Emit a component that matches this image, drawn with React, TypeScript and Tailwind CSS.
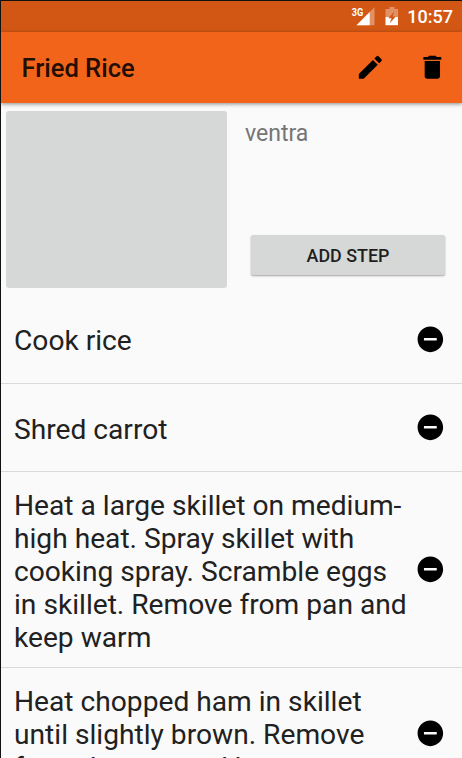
import React from "react";

const steps: { lines: string[]; height: string; shift: string }[] = [
  { lines: ["Cook rice"], height: "h-[89px]", shift: "pt-[2px]" },
  { lines: ["Shred carrot"], height: "h-[88px]", shift: "pt-[4px]" },
  {
    lines: [
      "Heat a large skillet on medium-",
      "high heat. Spray skillet with",
      "cooking spray. Scramble eggs",
      "in skillet. Remove from pan and",
      "keep warm",
    ],
    height: "h-[196px]",
    shift: "pt-[4px]",
  },
  {
    lines: ["Heat chopped ham in skillet", "until slightly brown. Remove", "from the pan and keep warm"],
    height: "h-[131px]",
    shift: "pt-[2px]",
  },
];

function StatusBar() {
  return (
    <div className="flex h-[31px] shrink-0 items-center justify-end bg-[#d35714] pr-[9px] text-white">
      <svg className="mr-[10px] h-[21px] w-[24px]" viewBox="0 0 24 21">
        <path d="M23.5 1.3v17.9H5.5z" fill="#fff" fillOpacity=".35" />
        <path d="M18.7 6.1v13.1H5.5z" fill="#fff" />
        <text x="0.8" y="9.6" fill="#fff" fontFamily="Roboto" fontWeight="700" fontSize="11" textLength="11.5" lengthAdjust="spacingAndGlyphs">3G</text>
      </svg>
      <svg className="mr-[8px] h-[21px] w-[14px]" viewBox="0 0 14 21">
        <path d="M4.5 1h5v2h3.5v8H.5V3h4z" fill="#fff" fillOpacity=".35" />
        <path d="M.5 11H13v8.2H.5z" fill="#fff" />
        <path d="M9.6 5.3 3.2 12.2h3.4l-2 5.2 6.2-6.9H7.6z" fill="#d35714" />
      </svg>
      <span className="text-[18px] leading-[20px] font-medium">10:57</span>
    </div>
  );
}

function AppBar() {
  return (
    <div className="z-10 flex h-[71px] shrink-0 items-center bg-[#f26419] pr-[14px] pl-[20.5px] shadow-[0_1px_4px_rgba(0,0,0,0.45)]">
      <h1 className="flex-1 text-[25.5px] leading-[30px] font-medium text-[#220e03]">Fried Rice</h1>
      <svg className="mr-[32px] size-[30.7px]" viewBox="0 0 24 24">
        <path d="M3 17.25V21h3.75L17.81 9.94l-3.75-3.75L3 17.25zM20.71 7.04a1 1 0 0 0 0-1.41l-2.34-2.34a1 1 0 0 0-1.41 0l-1.83 1.83 3.75 3.75 1.83-1.83z" />
      </svg>
      <svg className="size-[30.7px]" viewBox="0 0 24 24">
        <path d="M6 19c0 1.1.9 2 2 2h8c1.1 0 2-.9 2-2V7H6v12zM19 4h-3.5l-1-1h-5l-1 1H5v2h14V4z" />
      </svg>
    </div>
  );
}

export default function App() {
  return (
    <div className="flex h-[758px] w-[462px] flex-col overflow-hidden border-t border-l border-[#111] bg-[#fafafa] font-['Roboto',sans-serif]">
      <StatusBar />
      <AppBar />
      <section className="flex h-[192px] shrink-0 pt-2 pl-[5px]">
        <div className="h-[177px] w-[221px] rounded-[3px] bg-[#d6d8d7]" />
        <div className="flex flex-1 flex-col pl-[18px]">
          <p className="mt-[9px] text-[23px] leading-[27px] text-[#757575]">ventra</p>
          <button className="mt-[88px] ml-[6px] h-[40px] w-[194px] rounded-[2px] bg-[#d6d8d7] pt-px text-[17.9px] leading-[21px] font-medium text-[#1f1f1f] shadow-[0_1px_2px_rgba(0,0,0,0.35)]">
            ADD STEP
          </button>
        </div>
      </section>
      <ul>
        {steps.map((step) => (
          <li key={step.lines[0]} className={`${step.height} flex items-center border-b border-[#d9d9d9] pr-[16px] pl-[13px]`}>
            <p className={`${step.shift} flex-1 text-[28.16px] leading-[33px] whitespace-nowrap text-[#212121]`}>
              {step.lines.map((line) => (
                <span key={line} className="block">{line}</span>
              ))}
            </p>
            <svg className="size-[30.7px] shrink-0" viewBox="0 0 24 24">
              <path d="M12 2C6.48 2 2 6.48 2 12s4.48 10 10 10 10-4.48 10-10S17.52 2 12 2zm5 11H7v-2h10v2z" />
            </svg>
          </li>
        ))}
      </ul>
    </div>
  );
}
